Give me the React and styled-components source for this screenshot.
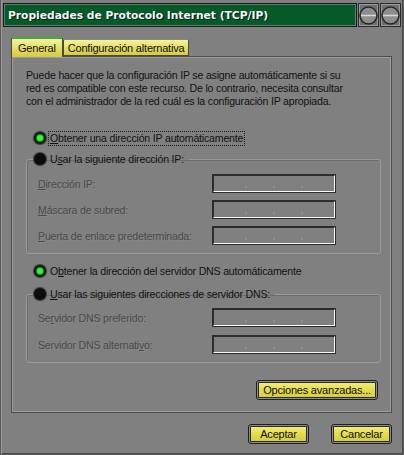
import React from "react";
import styled, { createGlobalStyle } from "styled-components";

const GlobalStyle = createGlobalStyle`
  html, body {
    margin: 0;
    padding: 0;
    background: #808080;
  }
  body {
    font-family: "Liberation Sans", Arial, sans-serif;
    font-size: 10.6px;
    letter-spacing: -0.2px;
    color: #121212;
  }
`;

const Window = styled.div`
  width: 404px;
  height: 455px;
  box-sizing: border-box;
  background: #808080;
  border: 1px solid #5a5a5a;
  border-top: none;
  box-shadow: inset 1px 0 0 #9a9a9a, inset -1px -1px 0 #4a4a4a;
  display: flex;
  flex-direction: column;
  padding: 3px 2px 0 2px;
`;

const TitleBar = styled.div`
  height: 24px;
  display: flex;
  align-items: stretch;
`;

const TitleText = styled.div`
  flex: 1;
  background: #065a29;
  border: 1px solid #1a1a1a;
  box-shadow: inset 0 0 0 1px #5e7f6a;
  color: #f4f4f4;
  font-family: "DejaVu Sans", Verdana, sans-serif;
  font-weight: bold;
  font-size: 10.7px;
  letter-spacing: 0;
  display: flex;
  align-items: center;
  padding-left: 4px;
  text-shadow: 1px 1px 0 #022010;
`;

const TitleButtons = styled.div`
  display: flex;
  gap: 1px;
  padding-left: 1px;
`;

const TitleButton = styled.div`
  width: 21px;
  box-sizing: border-box;
  border: 1px solid #2a2a2a;
  box-shadow: inset 0 0 0 1px #9a9a9a;
  background: #6e6e6e;
  display: flex;
  align-items: center;
  justify-content: center;
`;

const Body = styled.div`
  flex: 1;
  display: flex;
  flex-direction: column;
  padding: 10px 9px 0 8px;
`;

const Tabs = styled.div`
  display: flex;
  align-items: flex-end;
  height: 20px;
  margin-bottom: -1px;
`;

const Tab = styled.div`
  box-sizing: border-box;
  height: ${(p) => (p.$active ? "20px" : "17px")};
  padding: 0 ${(p) => (p.$active ? "6px" : "4px")};
  margin-bottom: ${(p) => (p.$active ? "0" : "1px")};
  display: flex;
  align-items: center;
  background: linear-gradient(#f7f3a0, #e2da5c 60%, #d4cb45);
  border: 1px solid #4a4a3a;
  border-bottom: ${(p) => (p.$active ? "none" : "1px solid #4a4a3a")};
  border-top: ${(p) => (p.$active ? "2px solid #3faa3c" : "1px solid #8a8a6a")};
  border-radius: 2px 2px 0 0;
  color: #101010;
  font-size: 11px;
  z-index: ${(p) => (p.$active ? 2 : 1)};
`;

const Panel = styled.div`
  box-sizing: border-box;
  height: 357px;
  border: 1px solid #4e4e4e;
  box-shadow: inset 1px 1px 0 #9c9c9c, inset -1px -1px 0 #9c9c9c;
  padding: 12px 12px 0 14px;
  display: flex;
  flex-direction: column;
`;

const Intro = styled.p`
  margin: 0;
  line-height: 13px;
  white-space: nowrap;
`;

const RadioRow = styled.div`
  display: flex;
  align-items: center;
  height: 14px;
  margin-top: ${(p) => p.$mt || 0}px;
  padding-left: 8px;
`;

const Radio = styled.span`
  width: 12px;
  height: 12px;
  border-radius: 50%;
  background: #0c0c0c;
  box-shadow: 0 0 1px 1px #3a3a3a;
  display: flex;
  align-items: center;
  justify-content: center;
  margin-right: 3px;
  flex-shrink: 0;
  &::after {
    content: "";
    display: ${(p) => (p.$checked ? "block" : "none")};
    width: 6px;
    height: 6px;
    border-radius: 50%;
    background: #3cf23c;
    box-shadow: 0 0 2px 1px #1cb21c;
  }
`;

const RadioLabel = styled.span`
  white-space: nowrap;
  padding: 0 1px;
  outline: ${(p) => (p.$focus ? "1px dotted #1a1a1a" : "none")};
  line-height: 13px;
`;

const Group = styled.fieldset`
  box-sizing: border-box;
  width: 355px;
  margin: ${(p) => p.$mt || 0}px 0 0 0;
  padding: ${(p) => p.$pt}px 10px 0 11px;
  height: ${(p) => p.$h}px;
  border: 1px solid #9a9a9a;
  border-radius: 3px;
  box-shadow: 1px 1px 0 #6c6c6c inset;
  display: flex;
  flex-direction: column;
  gap: ${(p) => p.$gap}px;
  min-width: 0;
`;

const Legend = styled.legend`
  padding: 0 4px 0 0;
  margin-left: -4px;
  display: flex;
  align-items: center;
  height: 14px;
`;

const FieldRow = styled.div`
  display: grid;
  grid-template-columns: 174px 124px;
  align-items: center;
  height: 19px;
`;

const FieldLabel = styled.span`
  color: #4a4a4a;
  text-shadow: 1px 1px 0 #888888;
  white-space: nowrap;
`;

const IpBox = styled.div`
  box-sizing: border-box;
  height: 19px;
  border: 2px solid #fafafa;
  border-top-color: #2c2c2c;
  border-left-color: #2c2c2c;
  outline: 1px solid #2c2c2c;
  outline-offset: -1px;
  display: flex;
  justify-content: space-around;
  align-items: flex-end;
  padding: 0 18px 3px;
`;

const Dot = styled.span`
  width: 2px;
  height: 2px;
  background: #8e8e8e;
`;

const Button = styled.button`
  box-sizing: border-box;
  height: 20px;
  width: ${(p) => p.$w}px;
  padding: 0;
  font-family: "Liberation Sans", Arial, sans-serif;
  font-size: 11px;
  letter-spacing: -0.2px;
  color: #101010;
  background: linear-gradient(#f4ef8e, #e6df4a 45%, #d2c938);
  border: 1px solid #1e1e1e;
  border-radius: 3px;
  box-shadow: inset 0 0 0 1px #8c8c8c, inset 0 0 0 2px #2a2a2a;
  cursor: pointer;
`;

const PanelFooter = styled.div`
  display: flex;
  justify-content: flex-end;
  margin-top: 17px;
  padding-right: 1px;
`;

const DialogFooter = styled.div`
  display: flex;
  justify-content: flex-end;
  gap: 22px;
  margin-top: 11px;
  padding-right: 0;
`;

const U = styled.u`
  text-decoration: underline;
  text-underline-offset: 1px;
`;

function Circle() {
  return (
    <svg width="19" height="19" viewBox="0 0 19 19">
      <circle cx="9.5" cy="9.5" r="8.5" fill="#8e8e8e" stroke="#262626" strokeWidth="1.5" />
      <line x1="2" y1="9.5" x2="17" y2="9.5" stroke="#d8d8d8" strokeWidth="1.5" />
    </svg>
  );
}

function IpField({ label }) {
  return (
    <FieldRow>
      <FieldLabel>{label}</FieldLabel>
      <IpBox>
        <Dot />
        <Dot />
        <Dot />
      </IpBox>
    </FieldRow>
  );
}

export default function App() {
  return (
    <>
      <GlobalStyle />
      <Window>
        <TitleBar>
          <TitleText>Propiedades de Protocolo Internet (TCP/IP)</TitleText>
          <TitleButtons>
            <TitleButton>
              <Circle />
            </TitleButton>
            <TitleButton>
              <Circle />
            </TitleButton>
          </TitleButtons>
        </TitleBar>
        <Body>
          <Tabs>
            <Tab $active>General</Tab>
            <Tab>Configuración alternativa</Tab>
          </Tabs>
          <Panel>
            <Intro>
              Puede hacer que la configuración IP se asigne automáticamente si su
              <br />
              red es compatible con este recurso. De lo contrario, necesita consultar
              <br />
              con el administrador de la red cuál es la configuración IP apropiada.
            </Intro>
            <RadioRow $mt={23}>
              <Radio $checked />
              <RadioLabel $focus>
                <U>O</U>btener una dirección IP automáticamente
              </RadioLabel>
            </RadioRow>
            <Group $mt={7} $pt={8} $h={102} $gap={7}>
              <Legend>
                <Radio />
                <RadioLabel>
                  U<U>s</U>ar la siguiente dirección IP:
                </RadioLabel>
              </Legend>
              <IpField
                label={
                  <>
                    <U>D</U>irección IP:
                  </>
                }
              />
              <IpField
                label={
                  <>
                    <U>M</U>áscara de subred:
                  </>
                }
              />
              <IpField
                label={
                  <>
                    <U>P</U>uerta de enlace predeterminada:
                  </>
                }
              />
            </Group>
            <RadioRow $mt={10}>
              <Radio $checked />
              <RadioLabel>
                O<U>b</U>tener la dirección del servidor DNS automáticamente
              </RadioLabel>
            </RadioRow>
            <Group $mt={9} $pt={7} $h={76} $gap={8}>
              <Legend>
                <Radio />
                <RadioLabel>
                  <U>U</U>sar las siguientes direcciones de servidor DNS:
                </RadioLabel>
              </Legend>
              <IpField
                label={
                  <>
                    Se<U>r</U>vidor DNS preferido:
                  </>
                }
              />
              <IpField
                label={
                  <>
                    Servidor DNS alternati<U>v</U>o:
                  </>
                }
              />
            </Group>
            <PanelFooter>
              <Button $w={122}>Opciones avanzadas...</Button>
            </PanelFooter>
          </Panel>
          <DialogFooter>
            <Button $w={61}>Aceptar</Button>
            <Button $w={61}>Cancelar</Button>
          </DialogFooter>
        </Body>
      </Window>
    </>
  );
}
